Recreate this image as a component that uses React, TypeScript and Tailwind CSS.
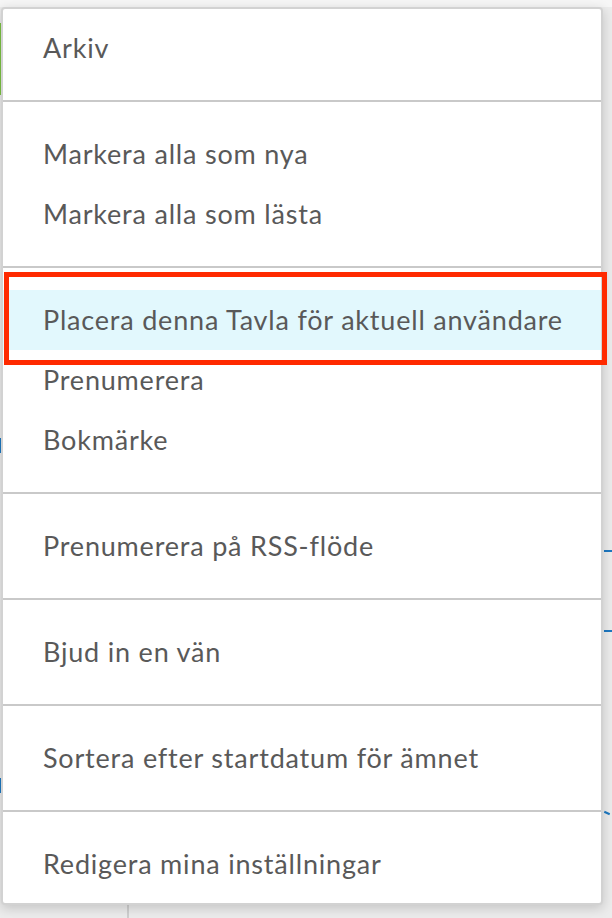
import React from 'react';

type Item = { label: string; active?: boolean };

const sections: Item[][] = [
  [{ label: 'Arkiv' }],
  [{ label: 'Markera alla som nya' }, { label: 'Markera alla som lästa' }],
  [
    { label: 'Placera denna Tavla för aktuell användare', active: true },
    { label: 'Prenumerera' },
    { label: 'Bokmärke' },
  ],
  [{ label: 'Prenumerera på RSS-flöde' }],
  [{ label: 'Bjud in en vän' }],
  [{ label: 'Sortera efter startdatum för ämnet' }],
  [{ label: 'Redigera mina inställningar' }],
];

function MenuItem({ item }: { item: Item }) {
  return (
    <div
      className={`h-[60px] pl-[40px] leading-[60px] text-[27px] tracking-[0.8px] text-[#595959] whitespace-nowrap ${
        item.active ? 'bg-[#e2f8fd]' : ''
      }`}
    >
      {item.label}
    </div>
  );
}

export default function App() {
  return (
    <div
      className="relative h-[918px] w-[612px] overflow-hidden bg-[#ececec]"
      style={{ fontFamily: 'Lato, "Open Sans", sans-serif' }}
    >
      {/* page underneath the dropdown */}
      <div className="absolute left-0 top-0 h-[7px] w-full bg-[#f6f6f6]" />
      <div className="absolute left-0 top-[23px] h-[72px] w-[2px] bg-[#7cc242]" />
      <div className="absolute left-0 top-[438px] h-[15px] w-[2px] bg-[#1d78c1]" />
      <div className="absolute left-0 top-[778px] h-[15px] w-[2px] bg-[#1d78c1]" />
      <div className="absolute left-[604px] top-[550px] h-[2px] w-[8px] bg-[#1d78c1]" />
      <div className="absolute left-[604px] top-[630px] h-[2px] w-[8px] bg-[#1d78c1]" />
      <div className="absolute left-[604px] top-[812px] h-[2px] w-[6px] rotate-[25deg] bg-[#1d78c1]" />
      <div className="absolute left-[127px] top-[900px] h-[18px] w-[2px] bg-[#cfcfcf]" />

      {/* dropdown menu */}
      <div className="absolute left-[1px] top-[7px] flex w-[602px] h-[898px] flex-col divide-y-2 divide-[#c9c9c9] rounded-[4px] border-2 border-[#d2d2d2] bg-white shadow-[0_3px_12px_rgba(0,0,0,0.18)]">
        {sections.map((items, i) => (
          <div
            key={i}
            className={`flex flex-col ${i === 0 ? 'pt-[9px]' : 'pt-[22px]'} ${
              i === sections.length - 1 ? 'pb-[9px]' : 'pb-[22px]'
            }`}
          >
            {items.map((item) => (
              <MenuItem key={item.label} item={item} />
            ))}
          </div>
        ))}
      </div>

      {/* highlight frame */}
      <div className="absolute left-[4px] top-[272px] h-[93px] w-[603px] border-[5px] border-[#ff2a00]" />
    </div>
  );
}
